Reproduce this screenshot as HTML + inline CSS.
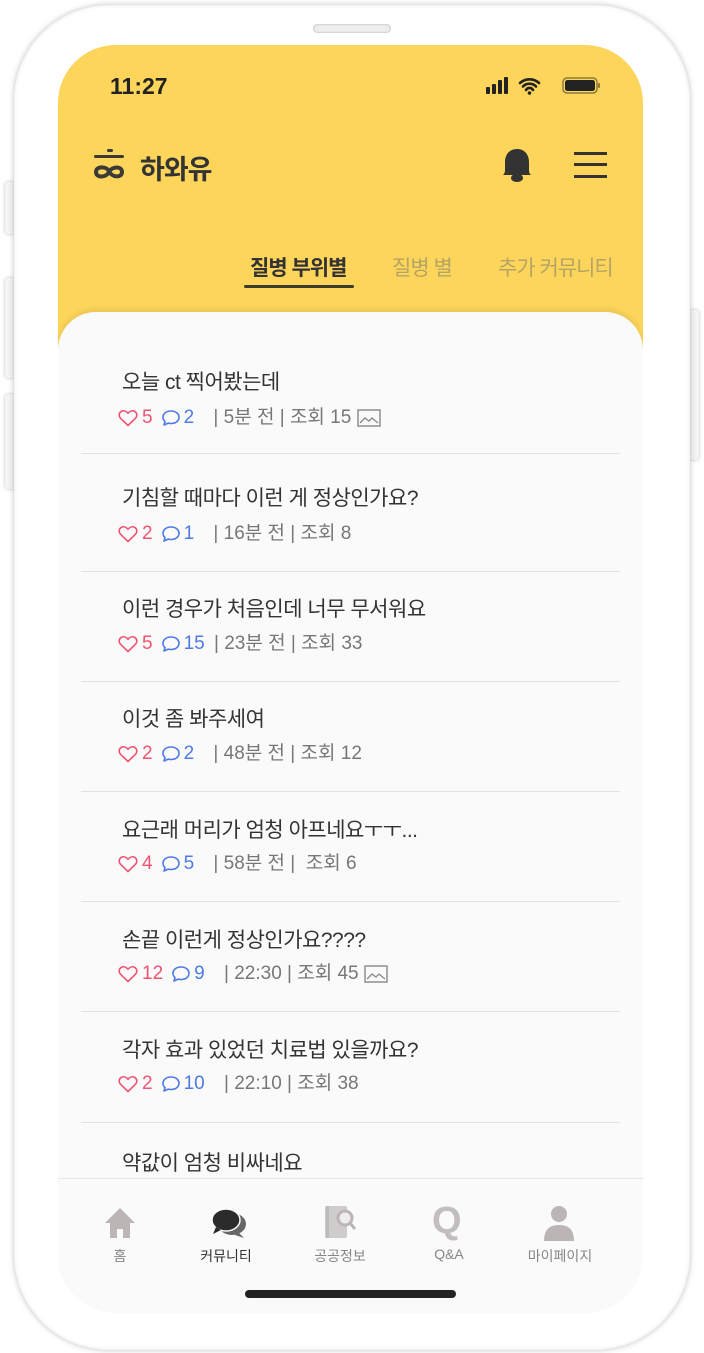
<!DOCTYPE html>
<html><head><meta charset="utf-8"><style>
*{margin:0;padding:0;box-sizing:border-box}
body{width:704px;height:1353px;background:#fff;position:relative;overflow:hidden;font-family:"Liberation Sans","Noto Sans CJK KR",sans-serif;color:#333}
.phone{position:absolute;left:14px;top:5px;width:676px;height:1345px;border-radius:95px;background:#fff;box-shadow:0 0 6px rgba(0,0,0,.25),inset 0 0 4px rgba(0,0,0,.1)}
.btn{position:absolute;background:#f4f4f4;box-shadow:0 0 3px rgba(0,0,0,.25);border-radius:3px}
.screen{position:absolute;left:58px;top:45px;width:585px;height:1268px;border-radius:58px;overflow:hidden;background:#fafafa}
.yellow{position:absolute;left:0;top:0;width:585px;height:320px;background:#fcd55a}
.card{position:absolute;left:0;top:267px;width:585px;height:1000px;background:#fafafa;border-radius:38px 38px 0 0;box-shadow:0 -3px 6px rgba(0,0,0,.08)}
.t{position:absolute;font-size:21px;color:#333;letter-spacing:-.5px}
.m{position:absolute;font-size:19px;color:#777;white-space:nowrap;display:flex;align-items:center;height:24px}
.m svg{flex:none}
.m span{display:block;line-height:24px;height:24px}
.h{color:#ef5470;margin:0 8px 0 4px}.c{color:#4d7ae6;margin:0 0 0 3px}
.sep{position:absolute;left:23px;width:539px;height:1px;background:#e2e2e2}
.nav{position:absolute;left:0;top:1133px;width:585px;height:140px;background:#fafafa;border-top:1px solid #e6e6e6}
.nl{position:absolute;top:1201px;font-size:14px;color:#8a8585;text-align:center;width:100px}
</style></head><body>
<svg width="0" height="0" style="position:absolute"><defs>
<symbol id="hr" viewBox="0 0 20 18"><path d="M10 16.5 2.6 9.3C0.5 7.2 0.8 3.8 3.2 2.4c2.2-1.3 4.9-.5 6.8 1.9 1.9-2.4 4.6-3.2 6.8-1.9 2.4 1.4 2.7 4.8.6 6.9z" fill="none" stroke="#ef5470" stroke-width="1.6" stroke-linejoin="round"/></symbol>
<symbol id="cm" viewBox="0 0 20 18"><path d="M10 2c4.7 0 8 2.7 8 6.3s-3.3 6.2-8 6.2c-1 0-2-.1-2.8-.4L3 16l1-3.4C2.7 11.5 2 10 2 8.3 2 4.7 5.3 2 10 2z" fill="none" stroke="#4d7ae6" stroke-width="1.6" stroke-linejoin="round"/></symbol>
<symbol id="im" viewBox="0 0 24 18"><rect x="1" y="1" width="22" height="16" fill="none" stroke="#888" stroke-width="1.4"/><path d="M3 14l5-5 4 3 3-3 6 5" fill="none" stroke="#888" stroke-width="1.3"/></symbol>
</defs></svg>
<div class="btn" style="left:5px;top:182px;width:10px;height:52px"></div>
<div class="btn" style="left:5px;top:278px;width:10px;height:100px"></div>
<div class="btn" style="left:5px;top:394px;width:10px;height:95px"></div>
<div class="btn" style="left:689px;top:310px;width:10px;height:150px"></div>
<div class="phone"></div>
<div style="position:absolute;left:313px;top:24px;width:78px;height:9px;border-radius:5px;background:#eee;box-shadow:inset 0 0 2px rgba(0,0,0,.3)"></div>
<div class="screen">
<div class="yellow"></div>
<div style="position:absolute;left:52px;top:28px;font-size:23px;font-weight:bold;color:#222">11:27</div>
<svg style="position:absolute;left:426px;top:30px" width="120" height="22" viewBox="0 0 120 22">
<rect x="2" y="12" width="4" height="7" rx="1" fill="#222"/><rect x="8" y="9" width="4" height="10" rx="1" fill="#222"/><rect x="14" y="5" width="4" height="14" rx="1" fill="#222"/><rect x="20" y="2" width="4" height="17" rx="1" fill="#222"/>
<path d="M36 8a14 14 0 0 1 19 0M39 11.5a9 9 0 0 1 13 0M42 15a4 4 0 0 1 7 0" stroke="#222" stroke-width="2.6" fill="none" stroke-linecap="round"/><circle cx="45.5" cy="18" r="1.8" fill="#222"/>
<rect x="79" y="3" width="34" height="15" rx="4" fill="none" stroke="#8a7a3a" stroke-width="1.5"/><rect x="81" y="5" width="30" height="11" rx="2.5" fill="#222"/><rect x="114" y="8" width="2" height="5" rx="1" fill="#8a7a3a"/>
</svg>
<svg style="position:absolute;left:34px;top:104px" width="36" height="36" viewBox="0 0 36 36">
<rect x="15" y="0" width="6" height="3" rx="1.5" fill="#3b3a36"/><rect x="2" y="6" width="30" height="3" rx="1.5" fill="#3b3a36"/>
<path d="M17 22c-3-5-13-5-13 1s10 6 13 0c3-6 13-6 13 0s-10 6-13-1z" fill="none" stroke="#3b3a36" stroke-width="4"/>
</svg>
<div style="position:absolute;left:82px;top:103px;font-size:27px;font-weight:bold;color:#333;letter-spacing:-1px">하와유</div>
<svg style="position:absolute;left:442px;top:100px" width="34" height="42" viewBox="0 0 34 42"><path d="M3 30c1-1 2-2 2-5V17C5 9 10 4 17 4s12 5 12 13v8c0 3 1 4 2 5z" fill="#333"/><ellipse cx="17" cy="33" rx="6" ry="4" fill="#333"/></svg>
<div style="position:absolute;left:516px;top:107px;width:33px;height:3px;background:#333"></div>
<div style="position:absolute;left:516px;top:118px;width:33px;height:3px;background:#333"></div>
<div style="position:absolute;left:516px;top:130px;width:33px;height:3px;background:#333"></div>
<div style="position:absolute;left:192px;top:207px;font-size:21px;font-weight:bold;color:#333;letter-spacing:-1px">질병 부위별</div>
<div style="position:absolute;left:186px;top:240px;width:110px;height:3px;background:#3d3a30;border-radius:2px"></div>
<div style="position:absolute;left:334px;top:207px;font-size:21px;color:#b5a464;letter-spacing:-1px">질병 별</div>
<div style="position:absolute;left:440px;top:207px;font-size:21px;color:#b5a464;letter-spacing:-1px">추가 커뮤니티</div>
<div class="card"></div>

<div class="t" style="left:64px;top:321px">오늘 ct 찍어봤는데</div>
<div class="m" style="left:60px;top:361px"><svg width="20" height="18"><use href="#hr"/></svg><span class="h">5</span><svg width="20" height="18"><use href="#cm"/></svg><span class="c">2</span><span style="margin-left:14px">&nbsp;| 5분 전 | 조회 15&nbsp;</span><svg width="24" height="18"><use href="#im"/></svg></div>
<div class="sep" style="top:408px"></div>
<div class="t" style="left:64px;top:437px">기침할 때마다 이런 게 정상인가요?</div>
<div class="m" style="left:60px;top:477px"><svg width="20" height="18"><use href="#hr"/></svg><span class="h">2</span><svg width="20" height="18"><use href="#cm"/></svg><span class="c">1</span><span style="margin-left:14px">&nbsp;| 16분 전 | 조회 8</span></div>
<div class="sep" style="top:526px"></div>
<div class="t" style="left:64px;top:548px">이런 경우가 처음인데 너무 무서워요</div>
<div class="m" style="left:60px;top:587px"><svg width="20" height="18"><use href="#hr"/></svg><span class="h">5</span><svg width="20" height="18"><use href="#cm"/></svg><span class="c">15</span><span style="margin-left:4px">&nbsp;| 23분 전 | 조회 33</span></div>
<div class="sep" style="top:636px"></div>
<div class="t" style="left:64px;top:658px">이것 좀 봐주세여</div>
<div class="m" style="left:60px;top:697px"><svg width="20" height="18"><use href="#hr"/></svg><span class="h">2</span><svg width="20" height="18"><use href="#cm"/></svg><span class="c">2</span><span style="margin-left:14px">&nbsp;| 48분 전 | 조회 12</span></div>
<div class="sep" style="top:746px"></div>
<div class="t" style="left:64px;top:769px">요근래 머리가 엄청 아프네요ㅜㅜ...</div>
<div class="m" style="left:60px;top:807px"><svg width="20" height="18"><use href="#hr"/></svg><span class="h">4</span><svg width="20" height="18"><use href="#cm"/></svg><span class="c">5</span><span style="margin-left:14px">&nbsp;| 58분 전 | &nbsp;조회 6</span></div>
<div class="sep" style="top:856px"></div>
<div class="t" style="left:64px;top:879px">손끝 이런게 정상인가요????</div>
<div class="m" style="left:60px;top:917px"><svg width="20" height="18"><use href="#hr"/></svg><span class="h">12</span><svg width="20" height="18"><use href="#cm"/></svg><span class="c">9</span><span style="margin-left:14px">&nbsp;| 22:30 | 조회 45&nbsp;</span><svg width="24" height="18"><use href="#im"/></svg></div>
<div class="sep" style="top:966px"></div>
<div class="t" style="left:64px;top:989px">각자 효과 있었던 치료법 있을까요?</div>
<div class="m" style="left:60px;top:1027px"><svg width="20" height="18"><use href="#hr"/></svg><span class="h">2</span><svg width="20" height="18"><use href="#cm"/></svg><span class="c">10</span><span style="margin-left:14px">&nbsp;| 22:10 | 조회 38</span></div>
<div class="sep" style="top:1077px"></div>
<div class="t" style="left:64px;top:1102px">약값이 엄청 비싸네요</div>
<div class="nav"></div>
<svg style="position:absolute;left:44px;top:1160px" width="36" height="36" viewBox="0 0 36 36"><path d="M18 3 3 18h5v15h20V18h5z" fill="#bcb5b5"/><rect x="15" y="24" width="6" height="9" fill="#fafafa"/></svg>
<svg style="position:absolute;left:152px;top:1160px" width="40" height="36" viewBox="0 0 40 36"><ellipse cx="22" cy="19" rx="14" ry="11" fill="#666"/><path d="M28 27l6 6-9-3z" fill="#666"/><ellipse cx="16" cy="15" rx="14" ry="11" fill="#2b2b2b" stroke="#fafafa" stroke-width="1.5"/><path d="M6 22l-3 7 8-4z" fill="#2b2b2b"/></svg>
<svg style="position:absolute;left:264px;top:1158px" width="40" height="40" viewBox="0 0 40 40"><rect x="3" y="3" width="22" height="32" rx="2" fill="#d0cccc"/><rect x="4" y="3" width="3" height="32" fill="#bbb"/><circle cx="23" cy="15" r="7" fill="#eee" stroke="#bcb5b5" stroke-width="3"/><path d="M28 20l5 6" stroke="#bcb5b5" stroke-width="3"/></svg>
<div style="position:absolute;left:374px;top:1155px;font-size:38px;font-weight:bold;color:#c4bdbd">Q</div>
<svg style="position:absolute;left:483px;top:1158px" width="36" height="40" viewBox="0 0 36 40"><circle cx="18" cy="11" r="8" fill="#bcb5b5"/><path d="M3 38c0-12 6-16 15-16s15 4 15 16z" fill="#bcb5b5"/></svg>
<div class="nl" style="left:12px">홈</div>
<div class="nl" style="left:118px;color:#333">커뮤니티</div>
<div class="nl" style="left:232px">공공정보</div>
<div class="nl" style="left:341px">Q&amp;A</div>
<div class="nl" style="left:452px">마이페이지</div>
<div style="position:absolute;left:187px;top:1245px;width:211px;height:8px;border-radius:4px;background:#222"></div>
</div>
</body></html>
